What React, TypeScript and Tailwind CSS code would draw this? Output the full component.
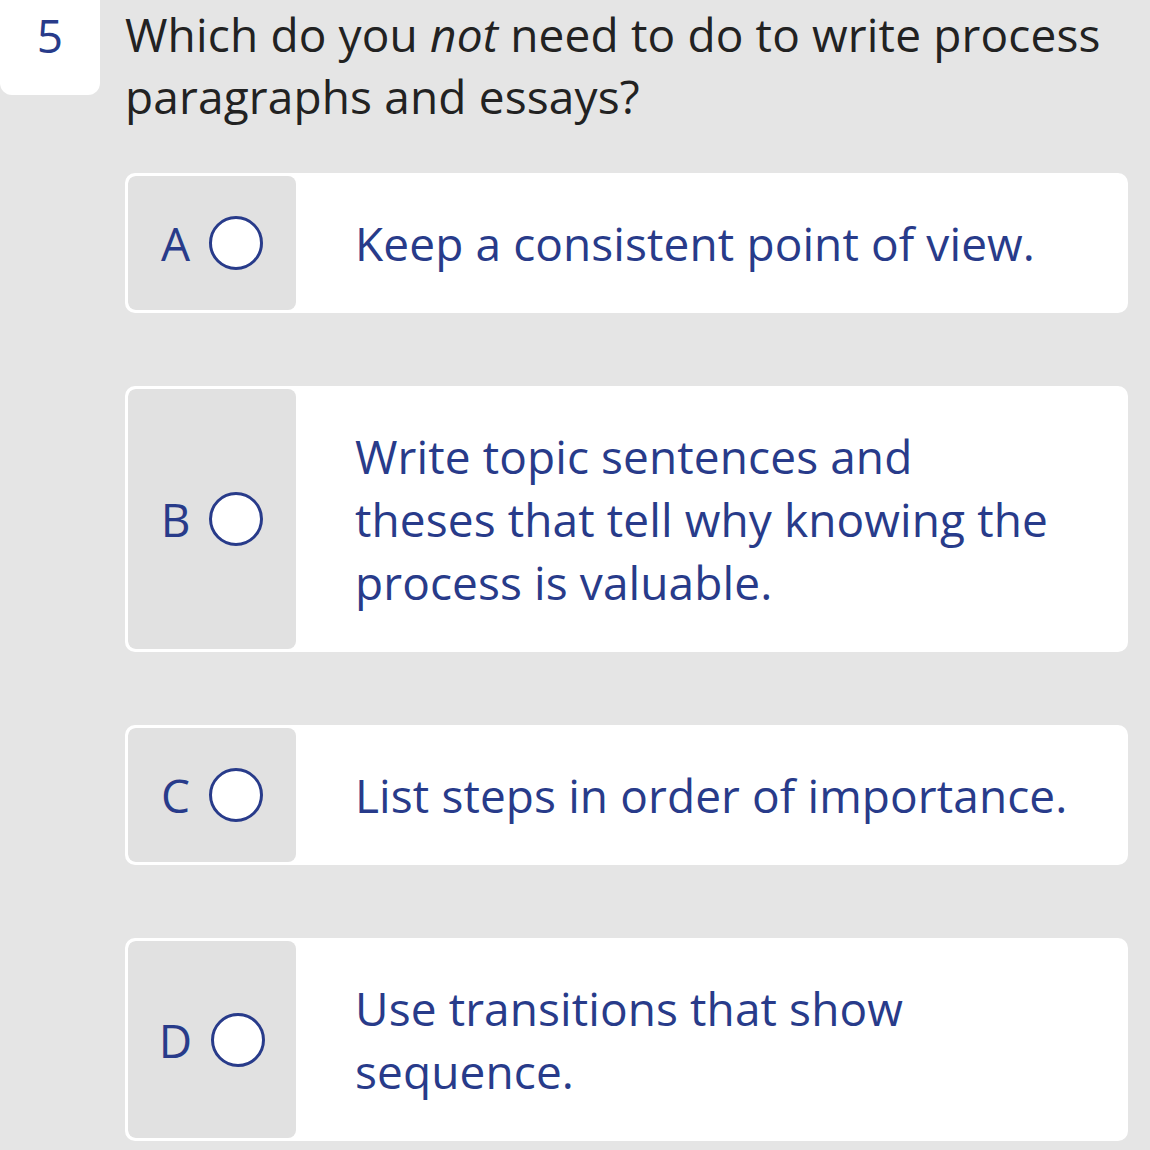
const options = [
  { letter: 'A', lines: ['Keep a consistent point of view.'] },
  { letter: 'B', lines: ['Write topic sentences and', 'theses that tell why knowing the', 'process is valuable.'] },
  { letter: 'C', lines: ['List steps in order of importance.'] },
  { letter: 'D', lines: ['Use transitions that show', 'sequence.'] },
];

const Option = ({ letter, lines }: { letter: string; lines: string[] }) => {
  return (
    <div className="flex overflow-hidden rounded-[10px] border-[3px] border-white bg-white">
      {/* letter + radio */}
      <div className="flex w-[168px] shrink-0 items-center justify-center gap-[19px] rounded-[8px] bg-[#e1e1e1]">
        <span className="text-[46px] leading-none text-[#283b8a]">{letter}</span>
        <span className="h-[54px] w-[54px] rounded-full border-[3px] border-[#283b8a] bg-white" />
      </div>
      <div className="py-[35.5px] pl-[59px] text-[46px] leading-[63px] tracking-[0.1px] text-[#283b8a]">
        {lines.map((line) => (
          <p key={line} className="whitespace-nowrap">
            {line}
          </p>
        ))}
      </div>
    </div>
  );
};

export default function App() {
  return (
    <div className="min-h-[1150px] w-full bg-[#e5e5e5] font-['Open_Sans',sans-serif]">
      <div className="flex gap-[25px] pr-[22px]">
        {/* question number */}
        <div className="h-[95px] w-[100px] shrink-0 rounded-b-[12px] bg-white pt-[4px] text-center text-[46px] leading-[62px] text-[#283b8a]">
          5
        </div>
        <div className="min-w-0 flex-1">
          <h1 className="mt-[3px] whitespace-nowrap text-[46px] font-normal leading-[62px] tracking-[0.15px] text-[#222222]">
            Which do you <em>not</em> need to do to write process
            <br />
            paragraphs and essays?
          </h1>
          <div className="mt-[46px] flex flex-col gap-[73px]">
            {options.map((opt) => (
              <Option key={opt.letter} letter={opt.letter} lines={opt.lines} />
            ))}
          </div>
        </div>
      </div>
    </div>
  );
}
